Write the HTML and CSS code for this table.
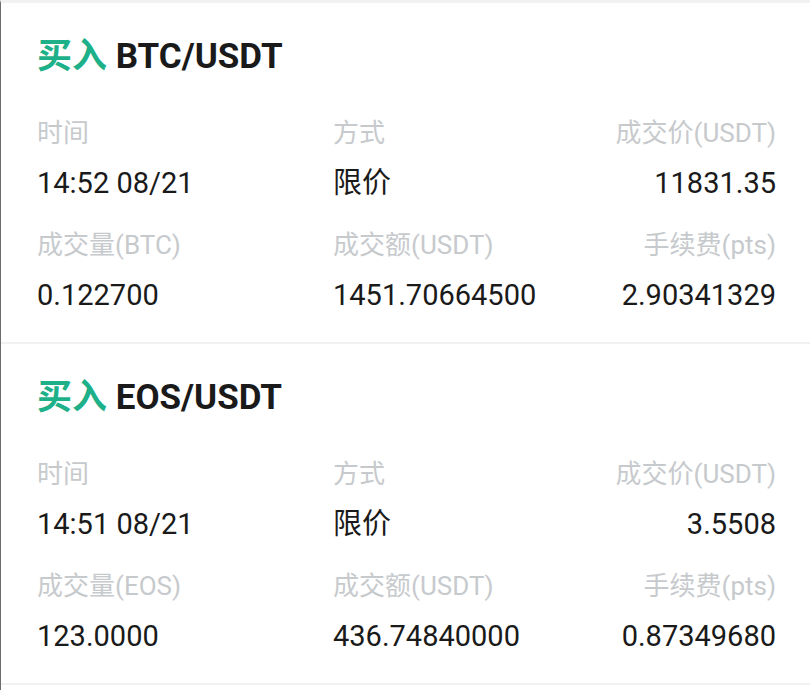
FILE: index.html
```html
<!DOCTYPE html>
<html lang="zh">
<head>
<meta charset="utf-8">
<title>成交记录</title>
<link rel="stylesheet" href="styles.css">
</head>
<body>
<div class="list">
  <section class="card">
    <h2 class="title"><span class="side">买入</span> BTC/USDT</h2>
    <div class="grid">
      <div class="label">时间</div>
      <div class="label">方式</div>
      <div class="label right">成交价(USDT)</div>
      <div class="value">14:52 08/21</div>
      <div class="value">限价</div>
      <div class="value right">11831.35</div>
      <div class="label row2">成交量(BTC)</div>
      <div class="label row2">成交额(USDT)</div>
      <div class="label row2 right">手续费(pts)</div>
      <div class="value">0.122700</div>
      <div class="value">1451.70664500</div>
      <div class="value right">2.90341329</div>
    </div>
  </section>
  <section class="card">
    <h2 class="title"><span class="side">买入</span> EOS/USDT</h2>
    <div class="grid">
      <div class="label">时间</div>
      <div class="label">方式</div>
      <div class="label right">成交价(USDT)</div>
      <div class="value">14:51 08/21</div>
      <div class="value">限价</div>
      <div class="value right">3.5508</div>
      <div class="label row2">成交量(EOS)</div>
      <div class="label row2">成交额(USDT)</div>
      <div class="label row2 right">手续费(pts)</div>
      <div class="value">123.0000</div>
      <div class="value">436.74840000</div>
      <div class="value right">0.87349680</div>
    </div>
  </section>
</div>
</body>
</html>
```
FILE: styles.css
```css
* { box-sizing: border-box; }
html, body {
  margin: 0;
  padding: 0;
  background: #ffffff;
}
body {
  font-family: Roboto, "Noto Sans CJK SC", sans-serif;
  color: #1c1c1c;
}
.list {
  width: 810px;
  min-height: 690px;
  border-top: 3px solid #f1f1f1;
  border-left: 1px solid #6b6b6b;
}
.card {
  padding: 34px 34px 27px 36px;
  border-bottom: 2px solid #f1f1f1;
}
.title {
  margin: 0;
  font-size: 35px;
  line-height: 40px;
  font-weight: 700;
  color: #1a1a1a;
}
.side {
  color: #1eb088;
}
.grid {
  margin-top: 39px;
  display: grid;
  grid-template-columns: 296px 1fr 1fr;
}
.label {
  font-size: 26px;
  line-height: 34px;
  color: #c7cacd;
}
.label.row2 {
  margin-top: 25px;
}
.value {
  margin-top: 13px;
  font-size: 29px;
  line-height: 40px;
  color: #1a1a1a;
  white-space: nowrap;
}
.right {
  text-align: right;
}
```
